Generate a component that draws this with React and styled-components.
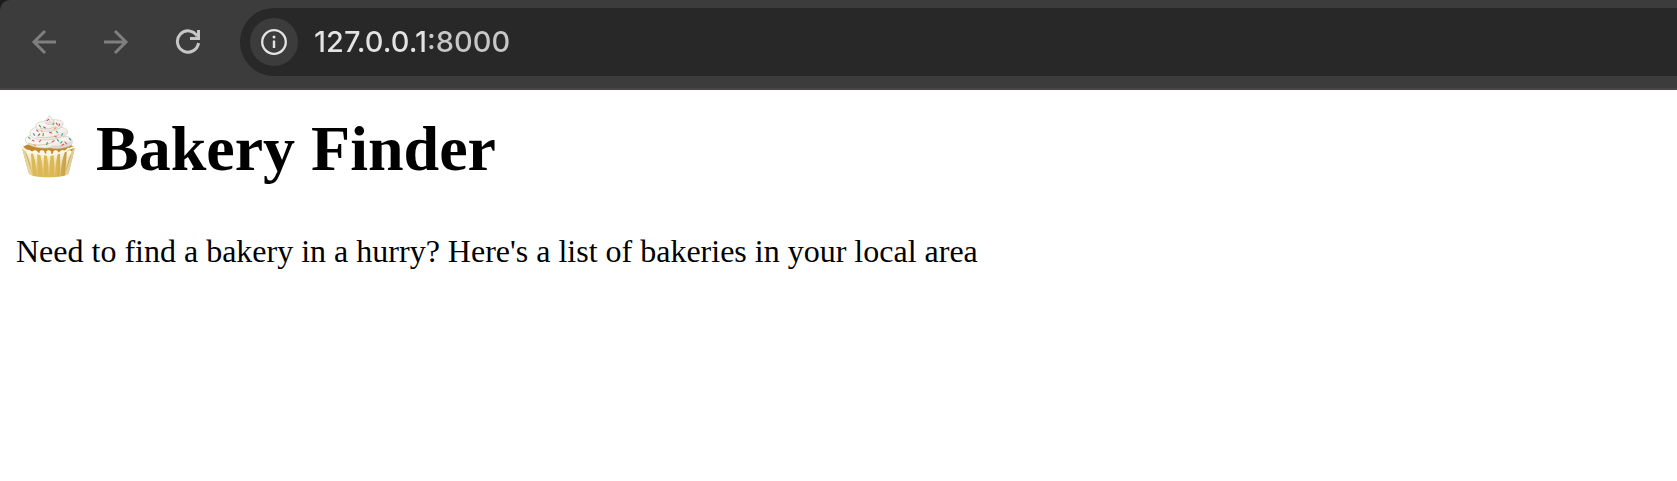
import React from "react";
import styled, { createGlobalStyle } from "styled-components";

const GlobalStyle = createGlobalStyle`
  * {
    box-sizing: border-box;
  }
  body {
    margin: 0;
    background: #ffffff;
    color: #000000;
    font-family: "Liberation Serif", "Times New Roman", serif;
  }
`;

const ToolbarFrame = styled.header`
  background: #1c1c1c;
`;

const Toolbar = styled.div`
  display: flex;
  align-items: center;
  height: 90px;
  padding: 0 0 4px 16px;
  background: #3c3c3c;
  border-bottom: 2px solid #4a4648;
  border-top-left-radius: 10px;
`;

const Navigation = styled.nav`
  display: flex;
  gap: 16px;
  margin-right: 24px;
`;

const IconButton = styled.button`
  display: flex;
  align-items: center;
  justify-content: center;
  width: 56px;
  height: 56px;
  padding: 0;
  border: 0;
  border-radius: 50%;
  background: transparent;
  color: ${({ disabled }) => (disabled ? "#7f7f7f" : "#c7c7c7")};
`;

const AddressBar = styled.div`
  display: flex;
  flex: 1;
  align-items: center;
  gap: 16px;
  height: 68px;
  padding-left: 10px;
  background: #282828;
  border-radius: 34px 0 0 34px;
`;

const SiteInfoButton = styled(IconButton)`
  width: 48px;
  height: 48px;
  background: #3c3c3c;
  color: #e3e3e3;
`;

const AddressInput = styled.input`
  flex: 1;
  min-width: 0;
  height: 40px;
  padding: 0;
  border: 0;
  outline: 0;
  background: linear-gradient(to right, #e3e3e3 113px, #c7c7c7 113px);
  background-clip: text;
  -webkit-background-clip: text;
  -webkit-text-fill-color: transparent;
  color: #e3e3e3;
  font: 500 29px/40px Inter, sans-serif;
`;

const Page = styled.main`
  padding: 22px 16px;
`;

const Title = styled.h1`
  display: flex;
  align-items: center;
  gap: 16px;
  margin: 0 0 47px;
  font-size: 64px;
  line-height: 74px;
  font-weight: bold;
`;

const Intro = styled.p`
  margin: 0;
  font-size: 32px;
  line-height: 37px;
`;

const stroke = { fill: "none", stroke: "currentColor", strokeWidth: 3 };

const BackIcon = () => (
  <svg width="26" height="26" viewBox="0 0 26 26" {...stroke} aria-hidden="true">
    <path d="M25 13H3M14 2 3 13l11 11" />
  </svg>
);

const ForwardIcon = () => (
  <svg width="26" height="26" viewBox="0 0 26 26" {...stroke} aria-hidden="true">
    <path d="M1 13h22M12 2l11 11-11 11" />
  </svg>
);

const ReloadIcon = () => (
  <svg width="26" height="26" viewBox="0 0 26 26" {...stroke} aria-hidden="true">
    <path d="M22.2 7.2A10.6 10.6 0 1 0 23.5 14" />
    <path d="M23.5 1v8.5H15" />
  </svg>
);

const InfoIcon = () => (
  <svg width="26" height="26" viewBox="0 0 26 26" aria-hidden="true">
    <circle cx="13" cy="13" r="11.8" fill="none" stroke="currentColor" strokeWidth="2.3" />
    <circle cx="13" cy="8" r="1.5" fill="currentColor" />
    <path d="M13 11.5V19" stroke="currentColor" strokeWidth="2.4" />
  </svg>
);

const sprinkles = [
  ["#d93a5d", 111, 45, 116, 41], ["#3dab55", 88, 59, 92, 64], ["#d93a8a", 101, 64, 106, 67],
  ["#43b45c", 129, 57, 132, 53], ["#e44f60", 139, 52, 142, 57], ["#e14b9d", 149, 55, 147, 60],
  ["#e35770", 80, 73, 84, 77], ["#e9ad39", 94, 75, 97, 79], ["#39a4cf", 70, 84, 74, 89],
  ["#d83a79", 85, 89, 89, 85], ["#49a85b", 100, 84, 99, 90], ["#d94582", 119, 80, 125, 82],
  ["#47ae62", 139, 77, 143, 81], ["#e3a73b", 133, 69, 138, 66], ["#45a7c8", 155, 89, 158, 84],
  ["#e56e55", 134, 92, 139, 94], ["#43a862", 56, 95, 60, 99], ["#d6478b", 67, 104, 72, 106],
  ["#e4b13d", 72, 117, 77, 120], ["#dc5575", 88, 108, 92, 104], ["#3fa65b", 112, 111, 110, 117],
  ["#dc6550", 127, 108, 132, 105], ["#389bc6", 142, 102, 146, 106], ["#43ad60", 152, 112, 156, 108],
  ["#d95366", 165, 109, 169, 114], ["#359ecb", 178, 98, 182, 103], ["#df536d", 156, 119, 161, 116],
];

const pleats = [
  [55, 68], [75, 82], [96, 100], [116, 117], [137, 134], [157, 150], [178, 165],
];

const Cupcake = () => (
  <svg width="64" height="72" viewBox="18 22 192 216" role="img" aria-label="Cupcake">
    <defs>
      <linearGradient id="cup" x1="0" x2="1">
        <stop offset="0" stopColor="#b9943f" />
        <stop offset=".2" stopColor="#dcb957" />
        <stop offset=".65" stopColor="#dcb755" />
        <stop offset="1" stopColor="#b08a37" />
      </linearGradient>
      <linearGradient id="pleat" x1="0" x2="0" y1="0" y2="1">
        <stop offset="0" stopColor="#fffdf3" />
        <stop offset=".4" stopColor="#f3e8c4" stopOpacity=".9" />
        <stop offset="1" stopColor="#e7cf88" stopOpacity=".5" />
      </linearGradient>
      <linearGradient id="cream" x1="0" x2="1" y1="0" y2="1">
        <stop offset="0" stopColor="#fffdfa" />
        <stop offset=".6" stopColor="#f5f1eb" />
        <stop offset="1" stopColor="#d8d0c5" />
      </linearGradient>
    </defs>
    <path d="M37 127c8-13 34-16 78-16s69 3 79 14l-8 23H45z" fill="#c18728" />
    <path d="M36 127 56 203c5 8 27 12 59 12s56-4 61-12l19-77-17 12-12 5-14 5-17-3-18 5-18-5-16 3-15-6-14-2z" fill="url(#cup)" />
    <path d="M35 124 57 204q5 4 10 5L45 134zM196 124l-21 80q-5 4-10 5l22-76z" fill="#f3e7c3" opacity=".7" />
    {pleats.map(([top, bottom]) => (
      <path
        key={top}
        d={`M${top - 8} 138Q${top} 130 ${top + 8} 138Q${(top + bottom) / 2 + 2} 160 ${bottom + 1} 211L${bottom - 1} 211Q${(top + bottom) / 2 - 2} 160 ${top - 8} 138Z`}
        fill="url(#pleat)"
      />
    ))}
    <path d="M36 125c7 2 8 11 17 10 7-1 10 9 19 5 8-3 12 8 21 4 9-3 14 7 23 2 8 4 15 0 22-4 8 4 14-1 20-5 8 3 12-3 17-8 7 2 10-5 19-4" fill="none" stroke="#fbf7e7" strokeWidth="6" strokeLinecap="round" strokeLinejoin="round" />
    <g fill="url(#cream)" stroke="#cfc6bb" strokeWidth="2">
      <path d="M59 90c-14 3-17 17-6 24 13 10 46 16 68 12 17 5 47 2 62-7 8-8 3-22-9-26z" />
      <path d="M72 67c-15 6-15 24-2 30 22 10 60 6 86-3 17-5 22-19 11-25-13-8-75-13-95-2z" />
      <path d="M96 49c-16-2-24 12-14 21 15 11 48 8 65-1 17-8 15-23 2-25-9-2-40-4-53 5z" />
      <path d="M117 30c1 8-11 9-12 17-1 9 15 13 23 7 8-7 0-16-11-24z" />
    </g>
    <path d="M56 113c20 9 52 6 73-4M127 123c18 3 39-2 53-12M80 94c23 5 48 1 67-7M91 69c16 3 33 0 45-6M110 52c8 2 14-3 8-8" fill="none" stroke="#d4ccc1" strokeWidth="3" strokeLinecap="round" />
    {sprinkles.map(([color, x1, y1, x2, y2]) => (
      <line key={`${x1}-${y1}`} x1={x1} y1={y1} x2={x2} y2={y2} stroke={color} strokeWidth="3.5" strokeLinecap="round" />
    ))}
  </svg>
);

export default function App() {
  return (
    <>
      <GlobalStyle />
      <ToolbarFrame>
        <Toolbar>
          <Navigation aria-label="Browser">
            <IconButton type="button" aria-label="Back" disabled>
              <BackIcon />
            </IconButton>
            <IconButton type="button" aria-label="Forward" disabled>
              <ForwardIcon />
            </IconButton>
            <IconButton type="button" aria-label="Reload">
              <ReloadIcon />
            </IconButton>
          </Navigation>
          <AddressBar>
            <SiteInfoButton type="button" aria-label="Site information">
              <InfoIcon />
            </SiteInfoButton>
            <AddressInput type="text" aria-label="Address" defaultValue="127.0.0.1:8000" />
          </AddressBar>
        </Toolbar>
      </ToolbarFrame>
      <Page>
        <Title>
          <Cupcake />
          Bakery Finder
        </Title>
        <Intro>Need to find a bakery in a hurry? Here's a list of bakeries in your local area</Intro>
      </Page>
    </>
  );
}
